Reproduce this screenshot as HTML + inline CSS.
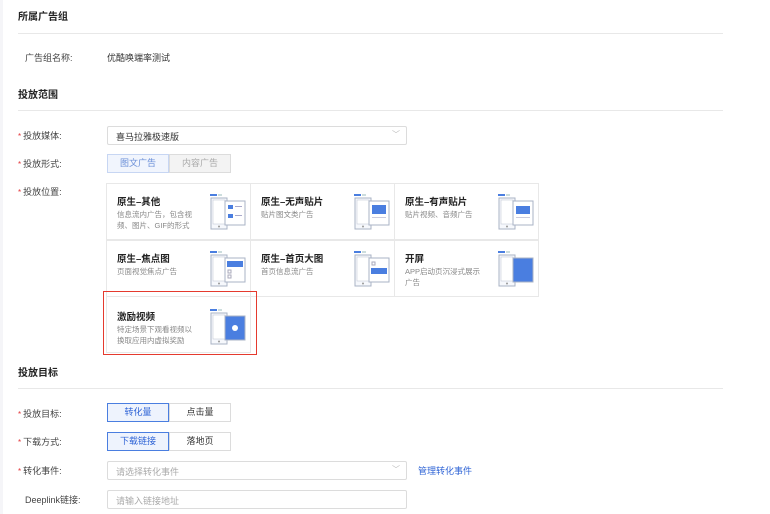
<!DOCTYPE html>
<html><head><meta charset="utf-8"><style>
*{margin:0;padding:0;box-sizing:border-box}
body{width:770px;height:514px;background:#fff;font-family:"Liberation Sans","Noto Sans CJK SC",sans-serif;font-size:9px;color:#333;position:relative;overflow:hidden}
.a{position:absolute;white-space:nowrap}
.t{font-size:10px;font-weight:bold;color:#222}
.ln{position:absolute;left:18px;width:705px;height:1px;background:#e8e8e8}
.lab{position:absolute;color:#444;font-size:9px}
.lab i{color:#e4393c;font-style:normal;font-size:8px;margin-right:2px}
.box{position:absolute;border:1px solid #dcdcdc;background:#fff;border-radius:2px}
.seg{position:absolute;display:flex;height:19px}
.seg div{width:62px;border:1px solid #dcdcdc;text-align:center;line-height:17px;font-size:9px;color:#333}
.seg .on{border-color:#4a7ee0;background:#eef3fd;color:#2f64d6}
.card{position:absolute;width:145px;height:57px;border:1px solid #e8e8e8;background:#fff}
.card b{position:absolute;left:10px;top:10px;font-size:9.5px;color:#222}
.card span{position:absolute;left:10px;top:25px;font-size:7.5px;color:#888;line-height:11px;width:78px;white-space:normal}
.card svg{position:absolute;left:103px;top:10px}
</style></head><body>
<div class="a" style="left:0;top:0;width:3px;height:514px;background:#f5f5f8"></div>
<div class="a t" style="left:18px;top:8px">所属广告组</div>
<div class="ln" style="top:33px"></div>
<div class="lab" style="left:25px;top:51px">广告组名称:</div>
<div class="a" style="left:107px;top:51px;color:#333">优酷唤端率测试</div>
<div class="a t" style="left:18px;top:86px">投放范围</div>
<div class="ln" style="top:110px"></div>

<div class="lab" style="left:18px;top:129px"><i>*</i>投放媒体:</div>
<div class="box" style="left:107px;top:126px;width:300px;height:19px"><span class="a" style="left:8px;top:3px">喜马拉雅极速版</span><span class="a" style="right:6px;top:2px;color:#bbb;font-size:8px">﹀</span></div>

<div class="lab" style="left:18px;top:157px"><i>*</i>投放形式:</div>
<div class="seg" style="left:107px;top:154px"><div class="on" style="background:#f1f5fd;border-color:#c7d6f3;color:#6a8fd8">图文广告</div><div style="background:#f3f3f3;color:#aaa">内容广告</div></div>

<div class="lab" style="left:18px;top:185px"><i>*</i>投放位置:</div>

<svg width="0" height="0" style="position:absolute"><defs>
<g id="ph"><rect x="0" y="0" width="7" height="2" fill="#4a7ee0"/><rect x="8" y="0.5" width="4" height="1" fill="#9bb"/><rect x="1" y="4" width="16" height="31" fill="#f6f8fc" stroke="#aab3c5" stroke-width="1"/><rect x="3" y="6" width="12" height="24" fill="#fff" stroke="#c5cbd8" stroke-width="0.6"/><circle cx="9" cy="32.5" r="1" fill="#999"/></g>
</defs></svg>

<div class="card" style="left:106px;top:183px"><b>原生–其他</b><span>信息流内广告，包含视频、图片、GIF的形式</span>
<svg width="40" height="40"><use href="#ph"/><rect x="15" y="7" width="20" height="24" fill="#fff" stroke="#aab3c5"/><rect x="18" y="11" width="5" height="4" fill="#4a7ee0"/><rect x="25" y="12" width="7" height="1" fill="#aac"/><rect x="18" y="20" width="5" height="4" fill="#4a7ee0"/><rect x="25" y="21" width="7" height="1" fill="#aac"/></svg></div>
<div class="card" style="left:250px;top:183px"><b>原生–无声贴片</b><span>贴片图文类广告</span>
<svg width="40" height="40"><use href="#ph"/><rect x="15" y="7" width="20" height="24" fill="#fff" stroke="#aab3c5"/><rect x="18" y="11" width="14" height="9" fill="#4a7ee0"/><rect x="18" y="23" width="14" height="1" fill="#ccd"/></svg></div>
<div class="card" style="left:394px;top:183px;width:145px"><b>原生–有声贴片</b><span>贴片视频、音频广告</span>
<svg width="40" height="40"><use href="#ph"/><rect x="15" y="7" width="20" height="24" fill="#fff" stroke="#aab3c5"/><rect x="18" y="12" width="14" height="8" fill="#4a7ee0"/><rect x="18" y="23" width="14" height="1" fill="#ccd"/></svg></div>
<div class="card" style="left:106px;top:240px"><b>原生–焦点图</b><span>页面视觉焦点广告</span>
<svg width="40" height="40"><use href="#ph"/><rect x="15" y="7" width="20" height="24" fill="#fff" stroke="#aab3c5"/><rect x="17" y="10" width="16" height="6" fill="#4a7ee0"/><rect x="18" y="19" width="3" height="3" fill="#fff" stroke="#aab"/><rect x="18" y="24" width="3" height="3" fill="#fff" stroke="#aab"/></svg></div>
<div class="card" style="left:250px;top:240px"><b>原生–首页大图</b><span>首页信息流广告</span>
<svg width="40" height="40"><use href="#ph"/><rect x="15" y="7" width="20" height="24" fill="#fff" stroke="#aab3c5"/><rect x="17" y="17" width="16" height="6" fill="#4a7ee0"/><rect x="18" y="11" width="3" height="3" fill="#fff" stroke="#aab"/></svg></div>
<div class="card" style="left:394px;top:240px;width:145px"><b>开屏</b><span>APP启动页沉浸式展示广告</span>
<svg width="40" height="40"><use href="#ph"/><rect x="15" y="7" width="20" height="24" fill="#4a7ee0" stroke="#aab3c5"/></svg></div>
<div class="card" style="left:106px;top:296px"><b style="top:12px">激励视频</b><span style="top:27px">特定场景下观看视频以换取应用内虚拟奖励</span>
<svg width="40" height="40" style="top:12px"><use href="#ph"/><rect x="15" y="7" width="20" height="24" fill="#4a7ee0" stroke="#aab3c5"/><circle cx="25" cy="19" r="3" fill="#fff"/></svg></div>
<div class="a" style="left:103px;top:291px;width:154px;height:64px;border:1.5px solid #e53a2e"></div>

<div class="a t" style="left:18px;top:364px">投放目标</div>
<div class="ln" style="top:388px"></div>
<div class="lab" style="left:18px;top:407px"><i>*</i>投放目标:</div>
<div class="seg" style="left:107px;top:403px"><div class="on">转化量</div><div>点击量</div></div>
<div class="lab" style="left:18px;top:435px"><i>*</i>下载方式:</div>
<div class="seg" style="left:107px;top:432px"><div class="on">下载链接</div><div>落地页</div></div>
<div class="lab" style="left:18px;top:464px"><i>*</i>转化事件:</div>
<div class="box" style="left:107px;top:461px;width:300px;height:19px"><span class="a" style="left:8px;top:3px;color:#aaa">请选择转化事件</span><span class="a" style="right:6px;top:2px;color:#bbb;font-size:8px">﹀</span></div>
<div class="a" style="left:418px;top:464px;color:#2f64d6">管理转化事件</div>
<div class="lab" style="left:25px;top:493px">Deeplink链接:</div>
<div class="box" style="left:107px;top:490px;width:300px;height:19px"><span class="a" style="left:8px;top:3px;color:#aaa">请输入链接地址</span></div>
</body></html>
